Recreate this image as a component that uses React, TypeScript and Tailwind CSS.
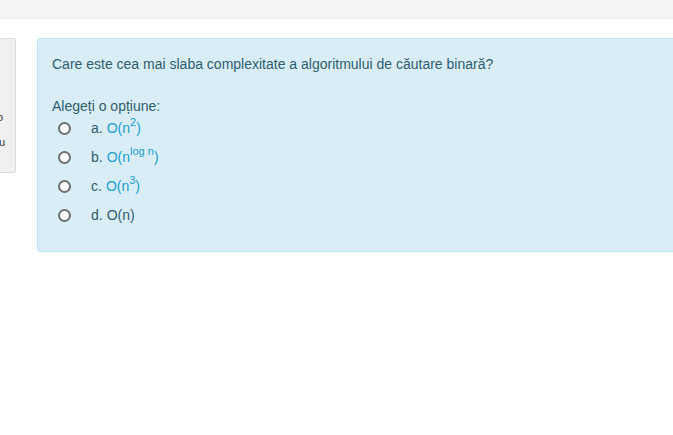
import React from "react";

const options = [
  { letter: "a.", base: "O(n", sup: "2", tail: ")", link: true },
  { letter: "b.", base: "O(n", sup: "log n", tail: ")", link: true },
  { letter: "c.", base: "O(n", sup: "3", tail: ")", link: true },
  { letter: "d.", base: "O(n)", sup: "", tail: "", link: false },
];

export default function App() {
  return (
    <div className="w-[673px] h-[435px] bg-white overflow-hidden font-['Liberation_Sans',Arial,sans-serif]">
      {/* top bar */}
      <div className="h-[19px] bg-[#f4f4f4] border-b border-[#ececec]"></div>

      <div className="flex items-start gap-[21px] mt-[19px]">
        {/* quiz info side panel (cut off) */}
        <div className="w-[16px] h-[135px] shrink-0 bg-[#f0f0f0] border border-l-0 border-[#dcdcdc] rounded-r-[3px] overflow-hidden relative text-[11px] text-[#333]">
          <span className="absolute left-[-3px] top-[70px]">o</span>
          <span className="absolute left-[-1px] top-[95px]">u</span>
        </div>

        {/* question formulation */}
        <div className="flex-1 h-[214px] bg-[#d9edf7] border border-r-0 border-[#bce8f1] rounded-l-[4px] pl-[14px] pt-[15px] text-[14px] text-[#2f5d6e]">
          <p className="leading-[20px]">Care este cea mai slaba complexitate a algoritmului de căutare binară?</p>
          <p className="mt-[22px] leading-[20px]">Alegeți o opțiune:</p>
          <div className="flex flex-col -mt-[2px]">
            {options.map((o) => (
              <div key={o.letter} className="flex items-center h-[29px]">
                <span className="ml-[6px] w-[13px] h-[13px] rounded-full border-2 border-[#6e6e6e] bg-white"></span>
                <span className="ml-[20px]">{o.letter}</span>
                <span className={"ml-[4px] " + (o.link ? "text-[#1a9fd0]" : "")}>
                  {o.base}
                  {o.sup && <sup className="text-[11px] top-[-0.6em]">{o.sup}</sup>}
                  {o.tail}
                </span>
              </div>
            ))}
          </div>
        </div>
      </div>
    </div>
  );
}
